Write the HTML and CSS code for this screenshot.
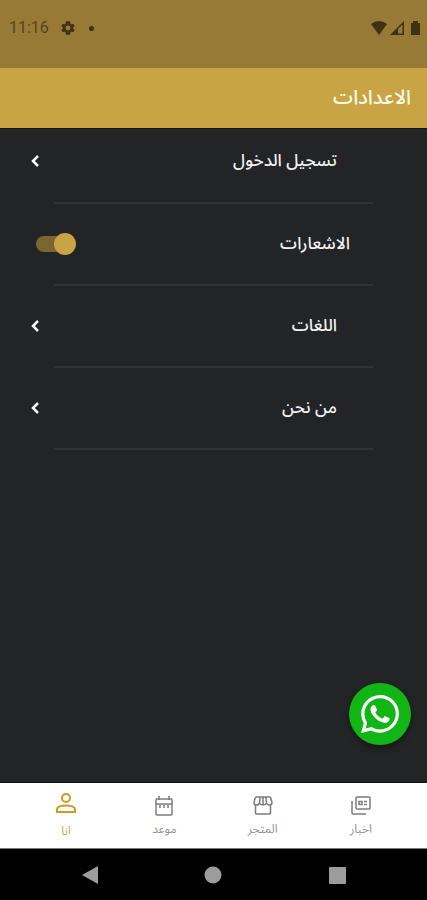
FILE: index.html
```html
<!DOCTYPE html>
<html lang="ar" dir="rtl">
<head>
<meta charset="utf-8">
<meta name="viewport" content="width=device-width, initial-scale=1">
<title>الاعدادات</title>
<link rel="stylesheet" href="styles.css">
</head>
<body>
<div class="status" dir="ltr">
  <div class="status-left">
    <span class="clock">11:16</span>
    <svg width="14" height="14" viewBox="2 2 20 20" aria-hidden="true"><path fill="currentColor" fill-rule="evenodd" d="M19.4 13a7.500 7.500 0 0 0 0-2l2.100-1.600-2-3.500-2.500 1a7 7 0 0 0-1.700-1L15 2.500H9l-.3 3.400a7 7 0 0 0-1.700 1l-2.500-1-2 3.500L4.600 11a7.500 7.500 0 0 0 0 2l-2.100 1.600 2 3.500 2.500-1a7 7 0 0 0 1.700 1l.3 3.400h6l.3-3.400a7 7 0 0 0 1.700-1l2.500 1 2-3.500zM12 8.500a3.500 3.500 0 1 1 0 7 3.500 3.500 0 0 1 0-7z"/></svg>
    <span class="dot"></span>
  </div>
  <div class="status-right">
    <svg width="16" height="14" viewBox="0 0 16 14" aria-hidden="true"><path fill="currentColor" d="M0 3Q8-3 16 3L8 14z"/></svg>
    <svg width="14" height="14" viewBox="0 0 14 14" aria-hidden="true"><path fill="none" stroke="currentColor" stroke-width="1.500" d="M1.800 13.200L13.200 1.800V13.200z"/><path fill="currentColor" d="M1 14L8 7v7z"/></svg>
    <svg class="battery" width="9" height="14" viewBox="0 0 9 14" aria-hidden="true"><path fill="currentColor" d="M0 2h2V0h5v2h2v12H0z"/></svg>
  </div>
</div>
<header class="appbar"><h1>الاعدادات</h1></header>
<main class="content">
  <ul class="settings">
    <li><a class="row" href="#login"><span>تسجيل الدخول</span><svg class="chevron" viewBox="0 0 10 14" aria-hidden="true"><path d="M8 2L3 7l5 5"/></svg></a></li>
    <li><label class="row row-switch"><span>الاشعارات</span><input class="switch" type="checkbox" role="switch" checked></label></li>
    <li><a class="row" href="#languages"><span>اللغات</span><svg class="chevron" viewBox="0 0 10 14" aria-hidden="true"><path d="M8 2L3 7l5 5"/></svg></a></li>
    <li><a class="row" href="#about"><span>من نحن</span><svg class="chevron" viewBox="0 0 10 14" aria-hidden="true"><path d="M8 2L3 7l5 5"/></svg></a></li>
  </ul>
  <button class="whatsapp" type="button" aria-label="واتساب">
    <svg width="38" height="38" viewBox="0 0 24 24" aria-hidden="true"><path fill="currentColor" d="M17.472 14.382c-.297-.149-1.758-.867-2.030-.967-.273-.099-.471-.148-.670.150-.197.297-.767.966-.940 1.164-.173.199-.347.223-.644.075-.297-.150-1.255-.463-2.390-1.475-.883-.788-1.480-1.761-1.653-2.059-.173-.297-.018-.458.130-.606.134-.133.298-.347.446-.520.149-.174.198-.298.298-.497.099-.198.050-.371-.025-.520-.075-.149-.669-1.612-.916-2.207-.242-.579-.487-.500-.669-.510-.173-.008-.371-.010-.570-.010-.198 0-.520.074-.792.372-.272.297-1.040 1.016-1.040 2.479 0 1.462 1.065 2.875 1.213 3.074.149.198 2.096 3.200 5.077 4.487.709.306 1.262.489 1.694.625.712.227 1.360.195 1.871.118.571-.085 1.758-.719 2.006-1.413.248-.694.248-1.289.173-1.413-.074-.124-.272-.198-.570-.347m-5.421 7.403h-.004a9.870 9.870 0 0 1-5.031-1.378l-.361-.214-3.741.982.998-3.648-.235-.374a9.860 9.860 0 0 1-1.510-5.260c.001-5.450 4.436-9.884 9.888-9.884 2.640 0 5.122 1.030 6.988 2.898a9.825 9.825 0 0 1 2.893 6.994c-.003 5.450-4.437 9.884-9.885 9.884m8.413-18.297A11.815 11.815 0 0 0 12.050 0C5.495 0 .160 5.335.157 11.892c0 2.096.547 4.142 1.588 5.945L.057 24l6.305-1.654a11.882 11.882 0 0 0 5.683 1.448h.005c6.554 0 11.890-5.335 11.893-11.893a11.821 11.821 0 0 0-3.480-8.413z"/></svg>
  </button>
</main>
<nav class="tabs">
  <a href="#news"><svg viewBox="0 0 20 20" aria-hidden="true"><path d="M6 1h12q1 0 1 1v10q0 1-1 1H6q-1 0-1-1V2q0-1 1-1zM1 5v12q0 1 1 1h13"/><path d="M8 5.500h3v3H8zM13 5.500h3M13 8.500h3"/></svg><span>اخبار</span></a>
  <a href="#store"><svg viewBox="0 0 20 20" aria-hidden="true"><path d="M3.500 1h13q1 0 1.300 1L19 6.500Q19 9 16.600 9T13.500 7Q12.500 9 10 9T6.500 7Q6 9 3.400 9T1 6.500L2.200 2q.3-1 1.300-1zM7.200 1L6.500 7M12.800 1l.7 6M10 1v8M2.500 9v8q0 1 1 1h13q1 0 1-1V9"/></svg><span>المتجر</span></a>
  <a href="#appointment"><svg viewBox="0 0 20 20" aria-hidden="true"><path d="M3 3h14q1 0 1 1v14q0 1-1 1H3q-1 0-1-1V4q0-1 1-1zM2 8h16M5 0v4M15 0v4M6 9v3M10 9v3M14 9v3"/></svg><span>موعد</span></a>
  <a class="active" href="#me" aria-current="page"><svg viewBox="0 0 22 22" aria-hidden="true"><circle cx="11" cy="6" r="4"/><path d="M2 20v-2.500c0-5.500 18-5.500 18 0V20z"/></svg><span>انا</span></a>
</nav>
<div class="system" dir="ltr">
  <button type="button" aria-label="رجوع"><svg width="18" height="18" viewBox="0 0 18 18"><path d="M17 0v18L1 9z"/></svg></button>
  <button type="button" aria-label="الرئيسية"><svg width="18" height="18" viewBox="0 0 18 18"><circle cx="9" cy="9" r="8.500"/></svg></button>
  <button type="button" aria-label="التطبيقات"><svg width="18" height="18" viewBox="0 0 18 18"><rect x="1" y="1" width="17" height="17" rx="1"/></svg></button>
</div>
</body>
</html>
```
FILE: styles.css
```css
* { box-sizing: border-box; }
body {
  margin: 0;
  min-height: 100vh;
  display: flex;
  flex-direction: column;
  background: #232425;
  color: #f2f2f2;
  font-family: "Noto Sans Arabic", "DejaVu Sans", sans-serif;
}
a { color: inherit; text-decoration: none; }
button { border: 0; padding: 0; cursor: pointer; }
svg { display: block; flex: none; }

.status {
  display: flex;
  justify-content: space-between;
  height: 68px;
  padding: 20px 7px 32px 9px;
  background: #967a35;
  color: #3f3113;
  font-family: Roboto, sans-serif;
}
.status-left, .status-right { display: flex; align-items: center; }
.status-left { gap: 12px; }
.status-right { gap: 3px; }
.clock { font-size: 16px; line-height: 16px; color: #57441c; }
.dot { width: 5px; height: 5px; margin-left: 2px; border-radius: 50%; background: currentColor; }
.battery { margin-left: 4px; }

.appbar {
  display: flex;
  align-items: center;
  height: 60px;
  padding: 0 16px;
  background: #c9a444;
  color: #fffbe8;
}
.appbar h1 { margin: 0; font-size: 20px; line-height: 32px; font-weight: 500; }

.content {
  flex: 1;
  display: flex;
  flex-direction: column;
  justify-content: space-between;
  border-top: 1px solid #101619;
  border-bottom: 1px solid #101112;
}
.settings { margin: 0; padding: 0; list-style: none; }
.settings li::after {
  content: "";
  display: block;
  height: 2px;
  margin: 0 54px;
  background: #313234;
}
.row {
  display: flex;
  align-items: center;
  justify-content: space-between;
  height: 80px;
  padding: 0 90px 0 30px;
  font-size: 17px;
  line-height: 32px;
  font-weight: 500;
}
.settings li:first-child .row { height: 73px; padding-bottom: 9px; }
.row-switch { padding-right: 77px; padding-left: 36px; }
.chevron { width: 10px; height: 14px; fill: none; stroke: #fff; stroke-width: 2.5; }
.switch {
  appearance: none;
  display: flex;
  align-items: center;
  position: relative;
  width: 40px;
  height: 24px;
  margin: 0;
}
.switch::before {
  content: "";
  width: 36px;
  height: 16px;
  margin-right: 4px;
  border-radius: 8px;
  background: #7b662f;
}
.switch::after {
  content: "";
  position: absolute;
  right: 0;
  top: 1px;
  width: 22px;
  height: 22px;
  border-radius: 50%;
  background: #c9a444;
}

.whatsapp {
  align-self: flex-start;
  display: grid;
  place-items: center;
  width: 62px;
  height: 62px;
  margin: 0 16px 37px;
  border-radius: 50%;
  background: #12b516;
  color: #fff;
  box-shadow: 0 3px 6px rgba(0, 0, 0, .4);
}

.tabs {
  display: grid;
  grid-template-columns: repeat(4, 1fr);
  height: 66px;
  padding: 0 17px;
  background: #fff;
  color: #929292;
  border-bottom: 1px solid #777;
}
.tabs a {
  display: flex;
  flex-direction: column;
  align-items: center;
  padding-top: 13px;
  gap: 4px;
  font-size: 12px;
  line-height: 20px;
}
.tabs svg { width: 20px; height: 20px; fill: none; stroke: #7c7c7c; stroke-width: 1.5; }
.tabs .active { padding-top: 9px; gap: 8px; color: #cfa747; }
.tabs .active svg { width: 22px; height: 22px; stroke: #cc9a29; stroke-width: 2; }

.system {
  display: grid;
  grid-template-columns: repeat(3, 1fr);
  height: 51px;
  padding: 0 28px;
  background: #000;
}
.system button { display: grid; place-items: center; background: none; }
.system svg { fill: #9c9c9c; }
```
